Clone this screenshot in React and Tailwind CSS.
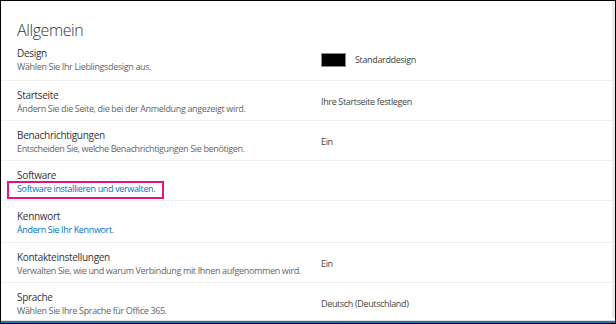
import React from "react";

const rows = [
  { title: "Design", desc: "Wählen Sie Ihr Lieblingsdesign aus.", value: "Standarddesign", swatch: true },
  { title: "Startseite", desc: "Ändern Sie die Seite, die bei der Anmeldung angezeigt wird.", value: "Ihre Startseite festlegen" },
  { title: "Benachrichtigungen", desc: "Entscheiden Sie, welche Benachrichtigungen Sie benötigen.", value: "Ein" },
  { title: "Software", desc: "Software installieren und verwalten.", link: true, marked: true },
  { title: "Kennwort", desc: "Ändern Sie Ihr Kennwort.", link: true },
  { title: "Kontakteinstellungen", desc: "Verwalten Sie, wie und warum Verbindung mit Ihnen aufgenommen wird.", value: "Ein" },
  { title: "Sprache", desc: "Wählen Sie Ihre Sprache für Office 365.", value: "Deutsch (Deutschland)" },
];

export default function App() {
  return (
    <div
      className="w-[616px] h-[324px] border border-black bg-white flex flex-col overflow-hidden"
      style={{ fontFamily: '"Open Sans", "Noto Sans", sans-serif' }}
    >
      <div className="flex flex-1 min-h-0">
        <div className="flex-1 flex flex-col">
          <h1 className="h-[40px] shrink-0 pl-4 pt-[19px] text-[16px] leading-[20px] font-light tracking-[-0.4px] text-[#333]">
            Allgemein
          </h1>
          {rows.map((row, i) => (
            <div
              key={row.title}
              className={`flex shrink-0 items-center border-b border-[#f0f0f0] ${row.title === "Kennwort" ? "h-[42px]" : "h-[40px]"} ${i === 0 ? "pb-[2px]" : "pt-[2px]"}`}
            >
              <div className="relative w-[320px] pl-4 flex flex-col whitespace-nowrap">
                <span className="text-[10px] leading-[14px] tracking-[-0.3px] text-[#333]">{row.title}</span>
                {row.link ? (
                  <a className="text-[9px] leading-[13px] tracking-[-0.35px] text-[#0072c6]">{row.desc}</a>
                ) : (
                  <span className="text-[9px] leading-[13px] tracking-[-0.35px] text-[#666]">{row.desc}</span>
                )}
                {row.marked && (
                  <div className="absolute left-[6px] bottom-[-4px] w-[157px] h-[18px] border-2 border-[#e2147f]" />
                )}
              </div>
              {row.value && (
                <div className="flex items-center gap-[9px] text-[9px] tracking-[-0.35px] text-[#444]">
                  {row.swatch && <span className="w-[25px] h-[14px] bg-black border border-[#888]" />}
                  <span>{row.value}</span>
                </div>
              )}
            </div>
          ))}
        </div>
        <div className="w-[3px] bg-[#ececec]" />
      </div>
      <div className="h-[1px] bg-[#e2e2e2] mt-[2px]" />
      <div className="h-[2px] bg-[#2b6cb0]" />
    </div>
  );
}
